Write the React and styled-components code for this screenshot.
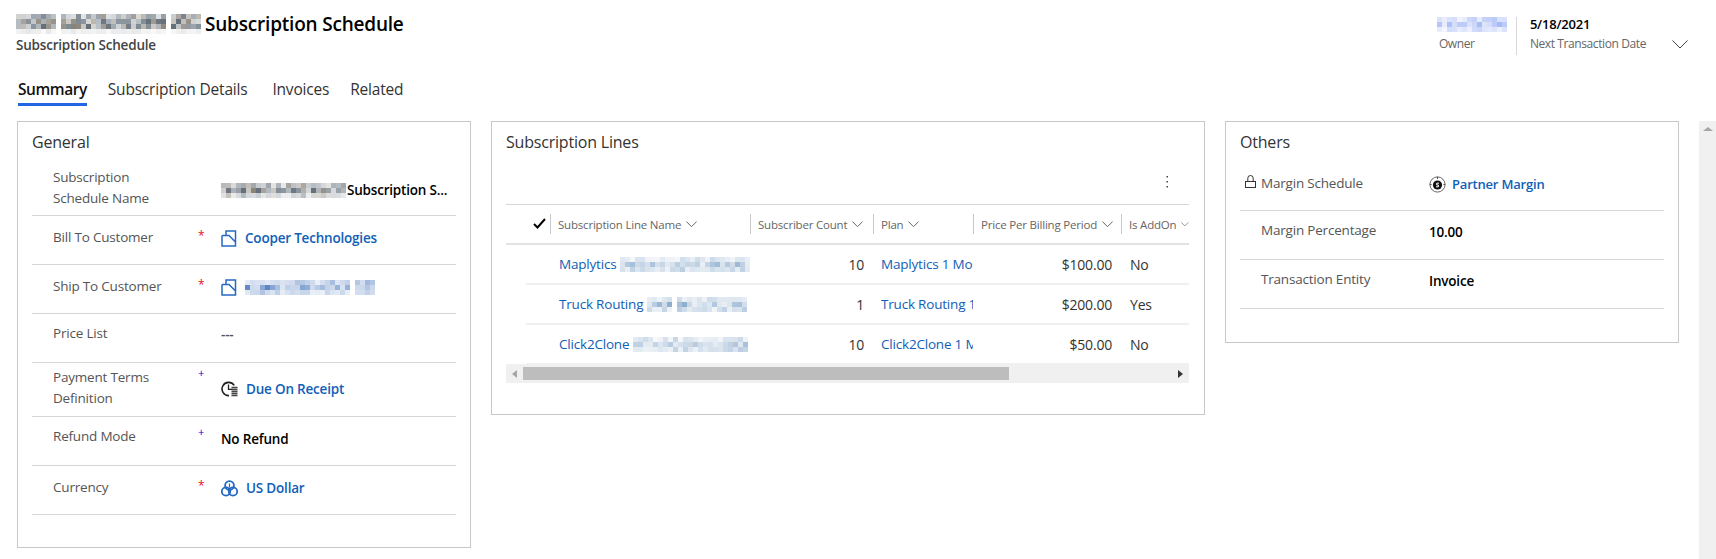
import React from 'react'
import styled, { createGlobalStyle } from 'styled-components'

const GlobalStyle = createGlobalStyle`
  html, body {
    margin: 0;
    padding: 0;
    background: #fff;
    overflow: hidden;
  }
  body {
    font-family: "Open Sans", "Noto Sans", "Liberation Sans", sans-serif;
    letter-spacing: -0.2px;
    color: #000;
  }
`

// redacted names in the screenshot are pixelated, so draw them as a mosaic
function Mosaic({ words, seed = 7, rows = [0.7, 1, 1, 0.15], palette, cell = 5 }) {
  let s = seed
  const rand = () => {
    s = (s * 1103515245 + 12345) % 2147483648
    return s / 2147483648
  }
  const rects = []
  let x = 0
  words.forEach((count) => {
    for (let i = 0; i < count; i++) {
      rows.forEach((level, r) => {
        const base = palette[Math.floor(rand() * palette.length)]
        const amount = Math.min(1, level * (0.35 + rand() * 0.9))
        rects.push(
          <rect key={`${x}-${r}`} x={x} y={r * cell} width={cell} height={cell} fill={base} opacity={amount} />,
        )
      })
      x += cell
    }
    x += cell
  })
  const w = x - cell
  const h = rows.length * cell
  return (
    <MosaicSvg width={w} height={h} viewBox={`0 0 ${w} ${h}`} shapeRendering="crispEdges">
      {rects}
    </MosaicSvg>
  )
}

const GREY = ['#6f7680', '#8a8478', '#7f8c94', '#98938a', '#66707a', '#8b95a0']
const BLUE = ['#6d8fc8', '#86a6d2', '#a4bbdf', '#7a9ccc', '#5f86c4']
const SOFT = ['#8fb0d0', '#a3bcd6', '#7fa3c8', '#b4c6da']
const OWNER = ['#a9bdf5', '#bccbfa', '#93aaf0', '#c8d4fb']

function Chevron({ size = 12, color = '#666', strokeWidth = 1 }) {
  return (
    <svg width={size} height={size / 2 + 1} viewBox="0 0 16 9" fill="none">
      <path d="M0.5 0.5 8 8 15.5 0.5" stroke={color} strokeWidth={strokeWidth * (16 / size)} />
    </svg>
  )
}

function AccountIcon() {
  return (
    <LookupSvg width="16" height="17" viewBox="0 0 16 17" fill="none" stroke="#2468c4" strokeWidth="1.5">
      <path d="M1 5.5V16h13.5V1H5v4.5M1 5.5h7l6.5 6.5" />
    </LookupSvg>
  )
}

function TermsIcon() {
  return (
    <LookupSvg width="17" height="16" viewBox="0 0 17 16" fill="none">
      <path d="M13.2 4.4A6.6 6.6 0 1 0 8 14.6" stroke="#222" strokeWidth="1.6" />
      <path d="M7.5 3.6V8.4H11" stroke="#222" strokeWidth="1.3" />
      <path d="M10.5 6.5h6M10.5 8.5h6M10.5 10.5h6M10.5 12.5h6M10.5 14.5h6" stroke="#444" strokeWidth="1.3" />
    </LookupSvg>
  )
}

function CurrencyIcon() {
  return (
    <LookupSvg width="17" height="17" viewBox="0 0 17 17" fill="none" stroke="#2468c4" strokeWidth="1.8">
      <circle cx="8.5" cy="5.5" r="4.4" />
      <circle cx="5" cy="11.5" r="4.2" />
      <circle cx="12" cy="11.5" r="4.2" />
      <path d="M8.5 3.5v4" strokeWidth="1.2" />
    </LookupSvg>
  )
}

function MarginIcon() {
  return (
    <LookupSvg width="17" height="17" viewBox="0 0 17 17" fill="none">
      <circle cx="8.5" cy="8.5" r="7.6" stroke="#555" strokeWidth="0.9" />
      <circle cx="8.5" cy="9" r="4.6" fill="#111" />
      <path d="M8.5 0.8V3M0.8 8.5H2.6M14.4 8.5h1.8" stroke="#555" strokeWidth="1" />
      <path d="M10 7.2H7.7V9H9.4V10.8H7" stroke="#fff" strokeWidth="1" />
    </LookupSvg>
  )
}

function LockIcon() {
  return (
    <svg width="11" height="13" viewBox="0 0 11 13" fill="none" stroke="#333" strokeWidth="1">
      <rect x="0.5" y="6.5" width="10" height="6" />
      <path d="M2.8 6.5V3.2a2.7 2.7 0 0 1 5.4 0v3.3" />
    </svg>
  )
}

function CheckIcon() {
  return (
    <svg width="13" height="11" viewBox="0 0 13 11" fill="none">
      <path d="M1 6l3.5 3.5L12 1" stroke="#000" strokeWidth="2" />
    </svg>
  )
}

function MoreIcon() {
  return (
    <svg width="3" height="12" viewBox="0 0 3 12" fill="#445">
      <rect x="0.5" y="0" width="1.5" height="1.5" />
      <rect x="0.5" y="5" width="1.5" height="1.5" />
      <rect x="0.5" y="10" width="1.5" height="1.5" />
    </svg>
  )
}

const tabs = ['Summary', 'Subscription Details', 'Invoices', 'Related']

const columns = [
  { label: 'Subscription Line Name', width: 200 },
  { label: 'Subscriber Count', width: 123 },
  { label: 'Plan', width: 100 },
  { label: 'Price Per Billing Period', width: 148 },
  { label: 'Is AddOn', width: 68 },
]

const lines = [
  { name: 'Maplytics', words: [27], seed: 11, count: '10', plan: 'Maplytics 1 Month', price: '$100.00', addOn: 'No' },
  { name: 'Truck Routing', words: [5, 14], seed: 23, count: '1', plan: 'Truck Routing 1 Month', price: '$200.00', addOn: 'Yes' },
  { name: 'Click2Clone', words: [23], seed: 31, count: '10', plan: 'Click2Clone 1 Month', price: '$50.00', addOn: 'No' },
]

function App() {
  return (
    <Page>
      <GlobalStyle />
      <Header>
        <div>
          <Title>
            <Mosaic words={[8, 21, 6]} palette={GREY} seed={5} />
            Subscription Schedule
          </Title>
          <SubTitle>Subscription Schedule</SubTitle>
        </div>
        <HeaderFields>
          <HeaderField>
            <HeaderValue>
              <Mosaic words={[14]} rows={[0.5, 0.9, 0.6]} palette={OWNER} seed={9} />
            </HeaderValue>
            <HeaderLabel $indent>Owner</HeaderLabel>
          </HeaderField>
          <HeaderDivider />
          <HeaderField>
            <HeaderValue>5/18/2021</HeaderValue>
            <HeaderLabel>Next Transaction Date</HeaderLabel>
          </HeaderField>
          <HeaderChevron>
            <Chevron size={16} color="#444" />
          </HeaderChevron>
        </HeaderFields>
      </Header>

      <TabBar>
        {tabs.map((tab, i) => (
          <Tab key={tab} $active={i === 0} $after={i === 1 ? 4 : 0}>
            {tab}
          </Tab>
        ))}
      </TabBar>

      <Body>
        <Sections>
          <Section $width={454} $height={427}>
            <SectionTitle>General</SectionTitle>
            <Rows $top={12}>
              <Row $height={51} $pad={2}>
                <span />
                <Label>
                  Subscription
                  <br />
                  Schedule Name
                </Label>
                <span />
                <Value $top={12} $gap={1}>
                  <Mosaic words={[25]} rows={[0.6, 1, 0.4]} palette={GREY} seed={17} />
                  Subscription S...
                </Value>
              </Row>
              <Row>
                <span />
                <Label>Bill To Customer</Label>
                <Required>*</Required>
                <Value>
                  <AccountIcon />
                  <Lookup>Cooper Technologies</Lookup>
                </Value>
              </Row>
              <Row>
                <span />
                <Label>Ship To Customer</Label>
                <Required>*</Required>
                <Value>
                  <AccountIcon />
                  <Lookup>
                    <Mosaic words={[21, 4]} rows={[0.5, 0.9, 0.45]} palette={BLUE} seed={3} />
                  </Lookup>
                </Value>
              </Row>
              <Row $pad={9}>
                <span />
                <Label>Price List</Label>
                <span />
                <Empty>---</Empty>
              </Row>
              <Row $height={54} $pad={4}>
                <span />
                <Label>
                  Payment Terms
                  <br />
                  Definition
                </Label>
                <Recommended>+</Recommended>
                <Value $top={11}>
                  <TermsIcon />
                  <Lookup>Due On Receipt</Lookup>
                </Value>
              </Row>
              <Row $pad={9}>
                <span />
                <Label>Refund Mode</Label>
                <Recommended>+</Recommended>
                <Value $top={2}>No Refund</Value>
              </Row>
              <Row>
                <span />
                <Label>Currency</Label>
                <Required>*</Required>
                <Value>
                  <CurrencyIcon />
                  <Lookup>US Dollar</Lookup>
                </Value>
              </Row>
            </Rows>
          </Section>

          <Section $width={714} $height={294}>
            <SectionTitle>Subscription Lines</SectionTitle>
            <GridActions>
              <MoreIcon />
            </GridActions>
            <GridFrame>
              <GridHead>
                <CheckCell>
                  <CheckIcon />
                </CheckCell>
                {columns.map((c) => (
                  <HeadCell key={c.label} $width={c.width}>
                    {c.label}
                    <Chevron size={11} />
                  </HeadCell>
                ))}
              </GridHead>
              {lines.map((line) => (
                <GridRow key={line.name}>
                  <CellSpacer />
                  <LinkCell $width={199}>
                    {line.name}
                    <Mosaic words={line.words} rows={[0.35, 0.75, 0.45]} palette={SOFT} seed={line.seed} />
                  </LinkCell>
                  <NumberCell $width={123}>{line.count}</NumberCell>
                  <LinkCell $width={100}>{line.plan}</LinkCell>
                  <NumberCell $width={148}>{line.price}</NumberCell>
                  <TextCell $width={68}>{line.addOn}</TextCell>
                </GridRow>
              ))}
              <HScroll>
                <ArrowLeft />
                <HThumb />
                <ArrowRight />
              </HScroll>
            </GridFrame>
          </Section>

          <Section $width={454} $height={222}>
            <SectionTitle>Others</SectionTitle>
            <Rows $top={9}>
              <Row>
                <LockSlot>
                  <LockIcon />
                </LockSlot>
                <Label>Margin Schedule</Label>
                <span />
                <Value>
                  <MarginIcon />
                  <Lookup $small>Partner Margin</Lookup>
                </Value>
              </Row>
              <Row $pad={9}>
                <span />
                <Label>Margin Percentage</Label>
                <span />
                <Value $top={1}>10.00</Value>
              </Row>
              <Row $pad={9}>
                <span />
                <Label>Transaction Entity</Label>
                <span />
                <Value $top={1}>Invoice</Value>
              </Row>
            </Rows>
          </Section>
        </Sections>
        <VScroll>
          <ArrowUp />
        </VScroll>
      </Body>
    </Page>
  )
}

export default App

const Page = styled.div`
  width: 1716px;
  height: 559px;
  display: flex;
  flex-direction: column;
  overflow: hidden;
`

const MosaicSvg = styled.svg`
  flex: none;
  display: block;
`

const LookupSvg = styled.svg`
  flex: none;
`

const Header = styled.header`
  display: flex;
  justify-content: space-between;
  height: 70px;
  padding: 12px 0 0 16px;
  box-sizing: border-box;
`

const Title = styled.h1`
  display: flex;
  align-items: center;
  gap: 4px;
  margin: 0;
  height: 24px;
  font-size: 19px;
  font-weight: 600;
  white-space: nowrap;
`

const SubTitle = styled.div`
  font-size: 13.5px;
  line-height: 18px;
  font-weight: 600;
  color: #444;
`

const HeaderFields = styled.div`
  display: flex;
  align-items: flex-start;
  padding-top: 5px;
`

const HeaderField = styled.div`
  display: flex;
  flex-direction: column;
  height: 38px;
`

const HeaderValue = styled.div`
  height: 19px;
  font-size: 13px;
  font-weight: 600;
  line-height: 15px;
`

const HeaderLabel = styled.div`
  font-size: 12px;
  line-height: 16px;
  letter-spacing: -0.4px;
  color: #666;
  padding-left: ${(p) => (p.$indent ? '2px' : '0')};
`

const HeaderDivider = styled.div`
  width: 1px;
  height: 38px;
  margin: 0 13px 0 9px;
  background: #d8d8d8;
`

const HeaderChevron = styled.div`
  margin: 15px 28px 0 26px;
`

const TabBar = styled.nav`
  display: flex;
  gap: 21px;
  height: 51px;
  padding-left: 18px;
  box-sizing: border-box;
`

const Tab = styled.div`
  height: 36px;
  padding-top: 8px;
  margin-right: ${(p) => p.$after}px;
  box-sizing: border-box;
  font-size: 15.5px;
  letter-spacing: ${(p) => (p.$active ? '-0.45px' : '-0.2px')};
  font-weight: ${(p) => (p.$active ? 600 : 400)};
  color: ${(p) => (p.$active ? '#111' : '#333')};
  border-bottom: 3px solid ${(p) => (p.$active ? '#2266e3' : 'transparent')};
`

const Body = styled.main`
  flex: 1;
  display: flex;
  justify-content: space-between;
`

const Sections = styled.div`
  display: flex;
  align-items: flex-start;
  gap: 20px;
  padding-left: 17px;
`

const Section = styled.section`
  width: ${(p) => p.$width}px;
  height: ${(p) => p.$height}px;
  box-sizing: border-box;
  border: 1px solid #c8c8c8;
  padding: 9px 14px 0;
`

const SectionTitle = styled.h2`
  margin: 0;
  font-size: 16px;
  line-height: 22px;
  font-weight: 400;
  color: #333;
`

const Rows = styled.div`
  margin-top: ${(p) => p.$top}px;
`

const Row = styled.div`
  display: grid;
  grid-template-columns: 21px 145px 23px 1fr;
  height: ${(p) => p.$height || 49}px;
  box-sizing: border-box;
  padding-top: ${(p) => (p.$pad === undefined ? 11 : p.$pad)}px;
  border-bottom: 1px solid #d6d6d6;
`

const LockSlot = styled.div`
  display: flex;
  align-items: flex-start;
  padding: 2px 0 0 5px;
`

const Label = styled.div`
  font-size: 13.5px;
  line-height: 21px;
  color: #555;
  white-space: nowrap;
`

const Required = styled.div`
  font-size: 12px;
  line-height: 18px;
  color: #e81123;
`

const Recommended = styled.div`
  font-size: 11px;
  line-height: 12px;
  color: #0000e0;
`

const Value = styled.div`
  display: flex;
  align-items: center;
  gap: ${(p) => (p.$gap === undefined ? 4 : p.$gap)}px;
  height: 22px;
  margin-top: ${(p) => p.$top || 0}px;
  font-size: 13.5px;
  font-weight: 600;
  white-space: nowrap;
  overflow: hidden;
`

const Empty = styled.div`
  line-height: 22px;
  font-size: 13.5px;
  font-weight: 600;
  color: #555;
`

const Lookup = styled.span`
  display: inline-flex;
  margin-left: ${(p) => (p.$small ? '2px' : '4px')};
  color: #1160b7;
  font-weight: 600;
  font-size: ${(p) => (p.$small ? '13px' : '13.5px')};
`

const GridActions = styled.div`
  display: flex;
  justify-content: flex-end;
  align-items: flex-start;
  height: 51px;
  padding: 23px 20px 0 0;
  box-sizing: border-box;
  width: 683px;
`

const GridFrame = styled.div`
  width: 683px;
  border-top: 1px solid #d6d6d6;
`

const GridHead = styled.div`
  display: flex;
  align-items: center;
  height: 40px;
  box-sizing: border-box;
  overflow: hidden;
  border-bottom: 2px solid #e2e2e2;
`

const CheckCell = styled.div`
  flex: none;
  display: flex;
  width: 44px;
  box-sizing: border-box;
  height: 20px;
  padding: 4px 0 0 27px;
`

const HeadCell = styled.div`
  flex: none;
  display: flex;
  align-items: center;
  gap: 5px;
  width: ${(p) => p.$width}px;
  height: 20px;
  box-sizing: border-box;
  padding-left: 7px;
  border-left: 1px solid #c8c8c8;
  font-size: 11.5px;
  color: #666;
  white-space: nowrap;
`

const GridRow = styled.div`
  display: flex;
  align-items: center;
  height: 40px;
  box-sizing: border-box;
  margin-left: 20px;
  border-bottom: 2px solid #f0f0f0;
  overflow: hidden;
`

const CellSpacer = styled.div`
  width: 25px;
  flex: none;
`

const cellWidth = (p) => p.$width

const LinkCell = styled.div`
  flex: none;
  display: flex;
  align-items: center;
  gap: 4px;
  width: ${cellWidth}px;
  box-sizing: border-box;
  padding-left: 8px;
  overflow: hidden;
  font-size: 13.5px;
  color: #1160b7;
  white-space: nowrap;
`

const NumberCell = styled.div`
  flex: none;
  width: ${cellWidth}px;
  box-sizing: border-box;
  padding-right: 9px;
  text-align: right;
  font-size: 14px;
  color: #333;
`

const TextCell = styled.div`
  flex: none;
  width: ${cellWidth}px;
  box-sizing: border-box;
  padding-left: 9px;
  font-size: 14px;
  color: #333;
`

const HScroll = styled.div`
  display: flex;
  align-items: center;
  height: 19px;
  margin-top: -1px;
  background: #f0f0f0;
  position: relative;
`

const HThumb = styled.div`
  width: 486px;
  height: 13px;
  margin-right: auto;
  background: #bdbdbd;
`

const triangle = `
  width: 0;
  height: 0;
  flex: none;
  border-style: solid;
`

const ArrowLeft = styled.div`
  ${triangle}
  margin: 0 6px 0 6px;
  border-width: 4px 5px 4px 0;
  border-color: transparent #a6a6a6 transparent transparent;
`

const ArrowRight = styled.div`
  ${triangle}
  margin-right: 6px;
  border-width: 4px 0 4px 5px;
  border-color: transparent transparent transparent #333;
`

const VScroll = styled.div`
  width: 17px;
  background: #f0f0f0;
  display: flex;
  justify-content: center;
  padding-top: 6px;
  box-sizing: border-box;
`

const ArrowUp = styled.div`
  ${triangle}
  border-width: 0 5px 4px 5px;
  border-color: transparent transparent #a6a6a6 transparent;
`
